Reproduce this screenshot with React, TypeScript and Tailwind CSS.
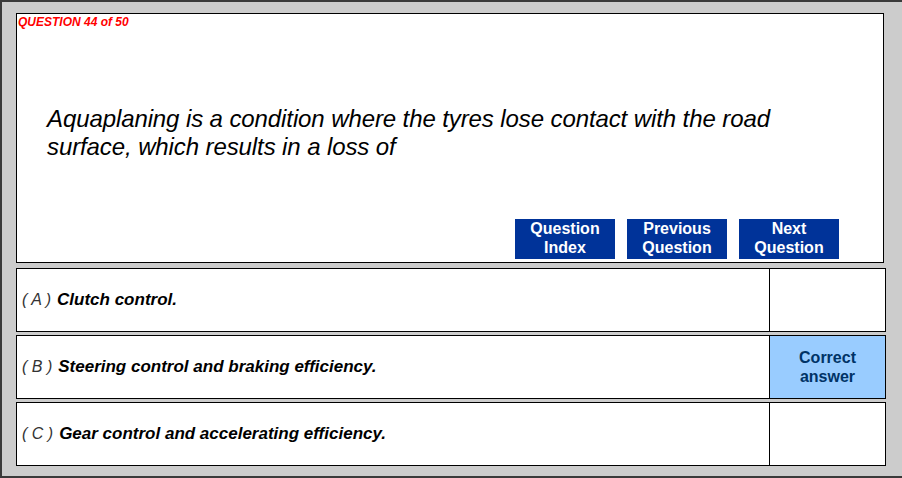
import React from 'react';

const answers = [
  { letter: 'A', text: 'Clutch control.', correct: false },
  { letter: 'B', text: 'Steering control and braking efficiency.', correct: true },
  { letter: 'C', text: 'Gear control and accelerating efficiency.', correct: false },
];

function NavButton({ top, bottom }: { top: string; bottom: string }) {
  return (
    <button className="w-[100px] h-[40px] bg-[#003399] text-white font-bold text-[16px] leading-[19px] flex flex-col items-center justify-center pb-[3px]">
      <span>{top}</span>
      <span>{bottom}</span>
    </button>
  );
}

export default function App() {
  return (
    <div
      className="w-[902px] h-[478px] bg-[#cccccc] border-t-2 border-l-2 border-b-2 border-[#3a3a3a] pl-[14px] pt-[11px] flex flex-col"
      style={{ fontFamily: '"Liberation Sans", Arial, sans-serif' }}
    >
      <div className="w-[868px] h-[250px] bg-white border border-black flex flex-col shrink-0">
        <div className="pl-[1px] pt-[1px] text-[12px] leading-[14px] font-bold italic text-[#ff0000]">
          QUESTION 44 of 50
        </div>
        <p className="mt-[76px] pl-[30px] pr-[60px] text-[24px] leading-[28px] italic text-black tracking-[-0.1px]">
          Aquaplaning is a condition where the tyres lose contact with the road surface, which results in a loss of
        </p>
        <div className="mt-auto mb-[3px] mr-[44px] flex justify-end gap-[12px]">
          <NavButton top="Question" bottom="Index" />
          <NavButton top="Previous" bottom="Question" />
          <NavButton top="Next" bottom="Question" />
        </div>
      </div>

      <div className="mt-[5px] flex flex-col gap-[3px]">
        {answers.map((a) => (
          <div key={a.letter} className="w-[870px] h-[64px] bg-white border border-black flex">
            <div className="flex-1 flex items-center pl-[5px] text-black italic">
              <span className="text-[16px] text-[#333]">( {a.letter} )</span>
              <span className="ml-[6px] text-[17px] font-bold">{a.text}</span>
            </div>
            <div
              className={
                a.correct
                  ? 'w-[116px] border-l border-black bg-[#99ccff] flex flex-col items-center justify-center text-[#003366] font-bold text-[16px] leading-[19px]'
                  : 'w-[116px] border-l border-black'
              }
            >
              {a.correct && (
                <>
                  <span>Correct</span>
                  <span>answer</span>
                </>
              )}
            </div>
          </div>
        ))}
      </div>
    </div>
  );
}
